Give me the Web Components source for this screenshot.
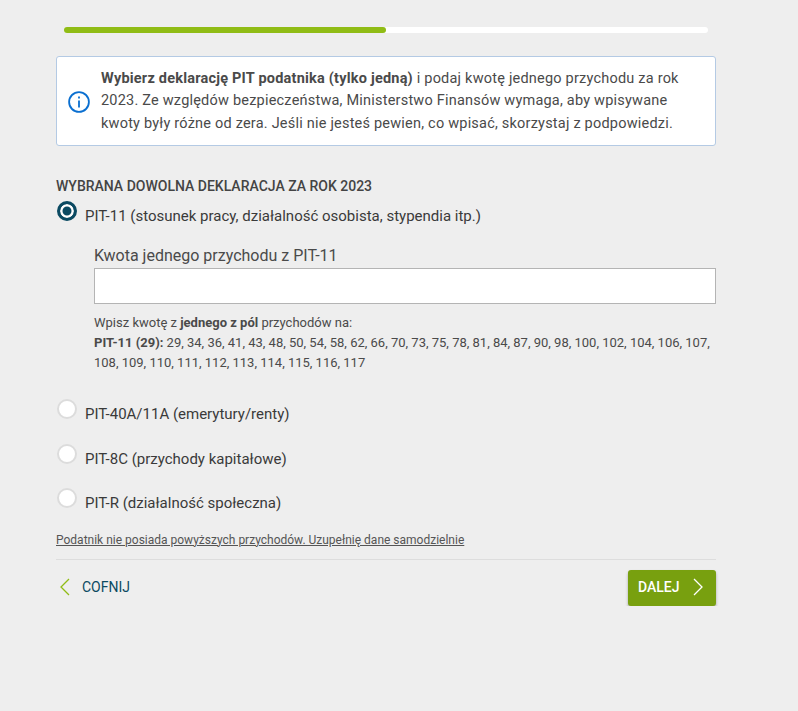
<!DOCTYPE html>
<html lang="pl">
<head>
<meta charset="utf-8">
<title>Deklaracja PIT</title>
<style>
  html, body { margin: 0; background: #eeeeee; }
  body { font-family: Roboto, "Liberation Sans", sans-serif; color: #333; }
</style>
</head>
<body>
<pit-form>
  <progress-bar value="50"></progress-bar>
  <info-box>
    <b>Wybierz deklarację PIT podatnika (tylko jedną)</b> i podaj kwotę jednego przychodu za rok 2023. Ze względów bezpieczeństwa, Ministerstwo Finansów wymaga, aby wpisywane kwoty były różne od zera. Jeśli nie jesteś pewien, co wpisać, skorzystaj z podpowiedzi.
  </info-box>
  <section-title>WYBRANA DOWOLNA DEKLARACJA ZA ROK 2023</section-title>
  <radio-option checked>PIT-11 (stosunek pracy, działalność osobista, stypendia itp.)</radio-option>
  <amount-field label="Kwota jednego przychodu z PIT-11">
    Wpisz kwotę z <b>jednego z pól</b> przychodów na:<br>
    <b>PIT-11 (29):</b> 29, 34, 36, 41, 43, 48, 50, 54, 58, 62, 66, 70, 73, 75, 78, 81, 84, 87, 90, 98, 100, 102, 104, 106, 107, 108, 109, 110, 111, 112, 113, 114, 115, 116, 117
  </amount-field>
  <radio-option>PIT-40A/11A (emerytury/renty)</radio-option>
  <radio-option>PIT-8C (przychody kapitałowe)</radio-option>
  <radio-option>PIT-R (działalność społeczna)</radio-option>
  <form-footer link="Podatnik nie posiada powyższych przychodów. Uzupełnię dane samodzielnie"></form-footer>
</pit-form>

<script>
// Page wrapper, only holds the column.
customElements.define('pit-form', class extends HTMLElement {
  constructor () {
    super()
    this.attachShadow({ mode: 'open' }).innerHTML = `
      <style>
        :host { display: block; width: 660px; padding: 27px 0 0 56px; }
      </style>
      <slot></slot>`
  }
})

customElements.define('progress-bar', class extends HTMLElement {
  constructor () {
    super()
    this.attachShadow({ mode: 'open' }).innerHTML = `
      <style>
        :host { display: block; height: 6px; margin: 0 8px 23px; background: #fff; border-radius: 3px; }
        div { height: 100%; background: #90bc15; border-radius: 3px; }
      </style>
      <div></div>`
    this.shadowRoot.querySelector('div').style.width = this.getAttribute('value') + '%'
  }
})

customElements.define('info-box', class extends HTMLElement {
  constructor () {
    super()
    this.attachShadow({ mode: 'open' }).innerHTML = `
      <style>
        :host {
          display: flex; align-items: center; box-sizing: border-box; height: 90px;
          padding: 1px 12px 0 11px; gap: 11px; background: #fff;
          border: 1px solid #b4cae4; border-radius: 3px;
          font-size: 14.5px; line-height: 22.5px; color: #4a4a4a; letter-spacing: .21px;
        }
        svg { flex: none; width: 22px; height: 22px; }
      </style>
      <svg viewBox="0 0 22 22" fill="none" stroke="#0a6fd0" stroke-width="1.8">
        <circle cx="11" cy="11" r="9.9"/>
        <path d="M11 9.6V16.4"/>
        <path d="M11 5.6V7.4"/>
      </svg>
      <div><slot></slot></div>`
  }
})

customElements.define('section-title', class extends HTMLElement {
  constructor () {
    super()
    this.attachShadow({ mode: 'open' }).innerHTML = `
      <style>
        :host { display: block; margin: 32px 0 7px; font-size: 14px; line-height: 16px; font-weight: 500; color: #444; }
      </style>
      <slot></slot>`
  }
})

customElements.define('radio-option', class extends HTMLElement {
  constructor () {
    super()
    this.attachShadow({ mode: 'open' }).innerHTML = `
      <style>
        :host { display: flex; align-items: flex-start; gap: 8px; height: 44.5px; padding-left: 1px; font-size: 15px; color: #3a3a3a; }
        :host(:first-of-type) { height: auto; }
        i { flex: none; box-sizing: border-box; width: 20px; height: 20px; border-radius: 50%; background: #fff; border: 2px solid #dcdcdc; }
        :host([checked]) i { border: 3px solid #0b4a62; background: #0b4a62; box-shadow: inset 0 0 0 2.5px #fff; }
        span { padding-top: 6px; line-height: 18px; }
      </style>
      <i></i><span><slot></slot></span>`
  }
})

customElements.define('amount-field', class extends HTMLElement {
  constructor () {
    super()
    this.attachShadow({ mode: 'open' }).innerHTML = `
      <style>
        :host { display: block; margin: 21px 0 26px 38px; }
        label { display: block; font-size: 16px; line-height: 20px; color: #4a4a4a; margin-bottom: 2px; }
        input { display: block; box-sizing: border-box; width: 100%; height: 36px; margin: 0; padding: 0 8px; background: #fff; border: 1px solid #b4b4b4; border-radius: 0; outline: none; }
        p { margin: 9px 0 0; font-size: 13px; line-height: 20px; color: #4a4a4a; }
      </style>
      <label for="amount"></label>
      <input id="amount" type="text">
      <p><slot></slot></p>`
    this.shadowRoot.querySelector('label').textContent = this.getAttribute('label')
  }
})

customElements.define('form-footer', class extends HTMLElement {
  constructor () {
    super()
    this.attachShadow({ mode: 'open' }).innerHTML = `
      <style>
        :host { display: block; font-size: 12px; color: #555; }
        a { display: block; line-height: 14px; color: #555; text-decoration: underline; }
        .row { display: flex; justify-content: space-between; align-items: center; margin-top: 12px; padding-top: 10px; border-top: 1px solid #dddddd; }
        .back, .next { display: flex; align-items: center; font-size: 14px; font-family: inherit; }
        .back { color: #0b4a62; gap: 12px; padding: 0 0 1px 3px; }
        .next { box-sizing: border-box; width: 88px; height: 36px; padding: 0 0 1px 10px; gap: 13px; color: #fff; font-weight: 500; background: #78a00f; border: 0; border-radius: 3px; box-shadow: 0 2px 3px rgba(0,0,0,.3); }
        svg { width: 11px; height: 18px; fill: none; stroke-width: 1.3; }
      </style>
      <a href="#"></a>
      <div class="row">
        <div class="back">
          <svg viewBox="0 0 11 18" stroke="#90bc15"><path d="M10 1L2 9l8 8"/></svg>
          COFNIJ
        </div>
        <button class="next">
          DALEJ
          <svg viewBox="0 0 11 18" stroke="#fff"><path d="M1 1l8 8-8 8"/></svg>
        </button>
      </div>`
    this.shadowRoot.querySelector('a').textContent = this.getAttribute('link')
  }
})
</script>
</body>
</html>
